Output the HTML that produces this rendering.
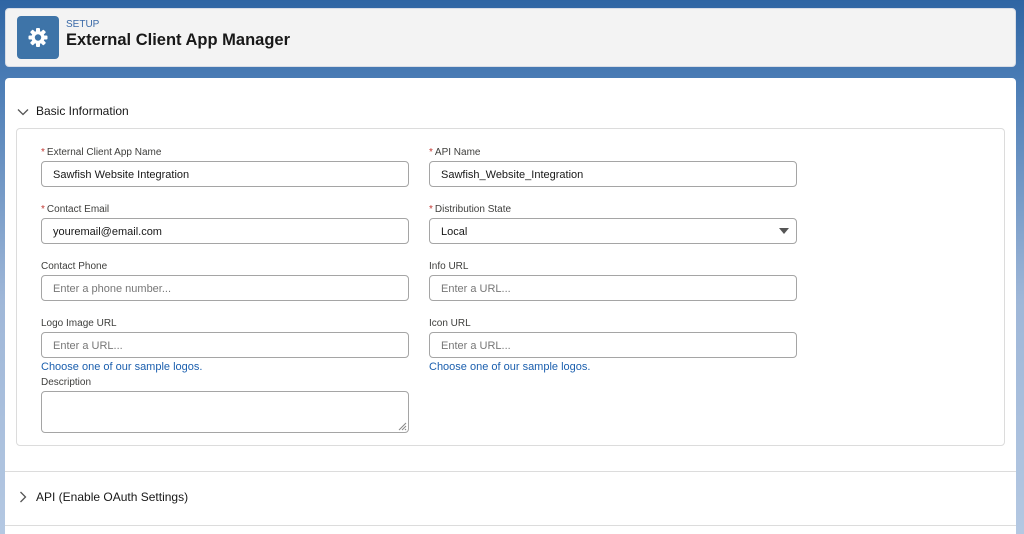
<!DOCTYPE html>
<html style="width:1024px;height:534px;overflow:hidden"><head><style>
*{box-sizing:border-box;margin:0;padding:0}
body{width:1024px;height:534px;overflow:hidden;font-family:"Liberation Sans",sans-serif;background:linear-gradient(180deg,#2f65a3 0px,#4a7cb5 80px,#9fb7d8 300px,#b4c8e2 534px) no-repeat;position:relative}
.hdr{position:absolute;left:5px;top:8px;width:1011px;height:59px;background:#f3f3f3;border-radius:4px;border:1px solid #d8dde6}
.ic{position:absolute;left:11px;top:7px;width:42px;height:43px;background:#3e74a8;border-radius:4px}
.setup{position:absolute;left:60px;top:10px;font-size:10px;color:#3a6aa8}
.title{position:absolute;left:60px;top:22px;font-size:16.5px;font-weight:bold;color:#181818}
.card{position:absolute;left:5px;top:78px;width:1011px;height:456px;background:#fff;border-radius:4px 4px 0 0}
.sec{position:absolute;left:36px;font-size:12px;color:#181818}
.chev{position:absolute;left:17px}
.box{position:absolute;left:16px;top:128px;width:989px;height:318px;border:1px solid #dcdcdc;border-radius:4px}
.lbl{position:absolute;font-size:10px;color:#3e3e3c}
.lbl b{color:#c23934;font-weight:normal;margin-right:2px}
.inp{position:absolute;width:368px;height:26px;border:1px solid #a5a5a5;border-radius:4px;font-size:11px;color:#181818;padding:7px 11px;background:#fff}
.ph{color:#777}
.lnk{position:absolute;font-size:11px;color:#1b5fae}
.div{position:absolute;left:5px;width:1011px;height:1px;background:#dcdcdc}
</style></head><body>
<div class="hdr">
 <div class="ic"><svg width="42" height="43" viewBox="0 0 42 43"><g transform="translate(21,21.5)" fill="#fff"><circle r="6.5"/><g id="t"><rect x="-2" y="-9.5" width="4" height="5" rx="1"/></g><use href="#t" transform="rotate(45)"/><use href="#t" transform="rotate(90)"/><use href="#t" transform="rotate(135)"/><use href="#t" transform="rotate(180)"/><use href="#t" transform="rotate(225)"/><use href="#t" transform="rotate(270)"/><use href="#t" transform="rotate(315)"/><circle r="3.2" fill="#3e74a8"/></g></svg></div>
 <div class="setup">SETUP</div>
 <div class="title">External Client App Manager</div>
</div>
<div class="card"></div>
<svg class="chev" style="top:106px" width="12" height="12" viewBox="0 0 12 12"><path d="M1 3.5 6 8.5 11 3.5" fill="none" stroke="#555" stroke-width="1.3"/></svg>
<div class="sec" style="top:104px">Basic Information</div>
<div class="box"></div>
<div class="lbl" style="left:41px;top:147px"><b>*</b>External Client App Name</div>
<div class="inp" style="left:41px;top:161px">Sawfish Website Integration</div>
<div class="lbl" style="left:429px;top:147px"><b>*</b>API Name</div>
<div class="inp" style="left:429px;top:161px">Sawfish_Website_Integration</div>
<div class="lbl" style="left:41px;top:204px"><b>*</b>Contact Email</div>
<div class="inp" style="left:41px;top:218px">youremail@email.com</div>
<div class="lbl" style="left:429px;top:204px"><b>*</b>Distribution State</div>
<div class="inp" style="left:429px;top:218px">Local<svg style="position:absolute;right:7px;top:9px" width="10" height="6"><path d="M0 0H10L5 6Z" fill="#555"/></svg></div>
<div class="lbl" style="left:41px;top:261px">Contact Phone</div>
<div class="inp ph" style="left:41px;top:275px">Enter a phone number...</div>
<div class="lbl" style="left:429px;top:261px">Info URL</div>
<div class="inp ph" style="left:429px;top:275px">Enter a URL...</div>
<div class="lbl" style="left:41px;top:318px">Logo Image URL</div>
<div class="inp ph" style="left:41px;top:332px">Enter a URL...</div>
<div class="lbl" style="left:429px;top:318px">Icon URL</div>
<div class="inp ph" style="left:429px;top:332px">Enter a URL...</div>
<div class="lnk" style="left:41px;top:361px">Choose one of our sample logos.</div>
<div class="lnk" style="left:429px;top:361px">Choose one of our sample logos.</div>
<div class="lbl" style="left:41px;top:377px">Description</div>
<div class="inp" style="left:41px;top:391px;height:42px"><svg style="position:absolute;right:1px;bottom:1px" width="9" height="9"><path d="M8 1 1 8M8 4 4 8M8 7 7 8" stroke="#888" stroke-width="1"/></svg></div>
<div class="div" style="top:471px"></div>
<svg class="chev" style="top:491px" width="12" height="12" viewBox="0 0 12 12"><path d="M3.5 1 8.5 6 3.5 11" fill="none" stroke="#555" stroke-width="1.3"/></svg>
<div class="sec" style="top:490px">API (Enable OAuth Settings)</div>
<div class="div" style="top:525px"></div>
</body></html>
